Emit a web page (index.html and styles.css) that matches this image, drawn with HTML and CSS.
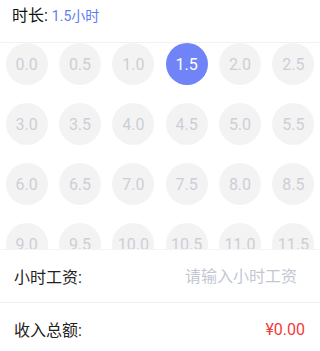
FILE: index.html
```html
<!DOCTYPE html>
<html lang="zh-CN">

<head>
    <meta charset="UTF-8">
    <meta name="viewport" content="width=device-width, initial-scale=1.0">
    <title>工资计算</title>
    <link rel="stylesheet" href="styles.css">
</head>

<body>
    <div class="page">
        <div class="header">
            <span class="label">时长: </span><span class="value" id="duration">1.5小时</span>
        </div>
        <div class="hours">
            <div class="hour-grid" id="hours"></div>
        </div>
        <div class="panel">
            <div class="row">
                <span class="row-label">小时工资:</span>
                <input class="row-input" type="text" placeholder="请输入小时工资">
            </div>
            <div class="row">
                <span class="row-label">收入总额:</span>
                <span class="total">¥0.00</span>
            </div>
        </div>
    </div>

    <script>
        const grid = document.getElementById('hours');
        let selected = 1.5;

        function render() {
            grid.innerHTML = '';
            for (let i = 0; i < 24; i++) {
                const value = i * 0.5;
                const item = document.createElement('div');
                item.className = 'hour' + (value === selected ? ' active' : '');
                item.textContent = value.toFixed(1);
                item.addEventListener('click', () => {
                    selected = value;
                    document.getElementById('duration').textContent = value.toFixed(1) + '小时';
                    render();
                });
                grid.appendChild(item);
            }
        }

        render();
    </script>
</body>

</html>
```

FILE: styles.css
```css
* {
    margin: 0;
    padding: 0;
    box-sizing: border-box;
}

body {
    font-family: Roboto, "Noto Sans CJK SC", sans-serif;
    background: #fff;
    color: #222;
    overflow: hidden;
}

.page {
    width: 320px;
    height: 351px;
    display: flex;
    flex-direction: column;
}

.header {
    height: 43px;
    padding: 4px 12px 0;
    line-height: 24px;
    border-bottom: 1px solid #f2f2f2;
    flex-shrink: 0;
}

.header .label {
    font-size: 16px;
    color: #111;
}

.header .value {
    font-size: 14px;
    color: #5f7cf3;
}

.hours {
    height: 206px;
    overflow: hidden;
    flex-shrink: 0;
}

.hour-grid {
    display: grid;
    grid-template-columns: repeat(6, 1fr);
    row-gap: 18px;
    justify-items: center;
}

.hour {
    width: 42px;
    height: 42px;
    border-radius: 50%;
    background: #f3f3f3;
    color: #cdcfd6;
    font-size: 16px;
    display: flex;
    justify-content: center;
    align-items: center;
    cursor: pointer;
}

.hour.active {
    background: #7084f7;
    color: #fff;
}

.panel {
    flex: 1;
    background: #fff;
    border-top: 1px solid #f4f4f4;
}

.row {
    height: 53px;
    display: flex;
    align-items: center;
    justify-content: space-between;
    padding: 0 15px 0 14px;
    border-bottom: 1px solid #f2f2f2;
}

.row-label {
    font-size: 16px;
    color: #222;
}

.row-input {
    border: none;
    outline: none;
    text-align: right;
    font-family: inherit;
    font-size: 16px;
    width: 160px;
    padding-right: 8px;
    color: #222;
    background: transparent;
}

.row-input::placeholder {
    color: #c3c7d3;
}

.total {
    font-size: 16px;
    color: #f23b3b;
}
```
